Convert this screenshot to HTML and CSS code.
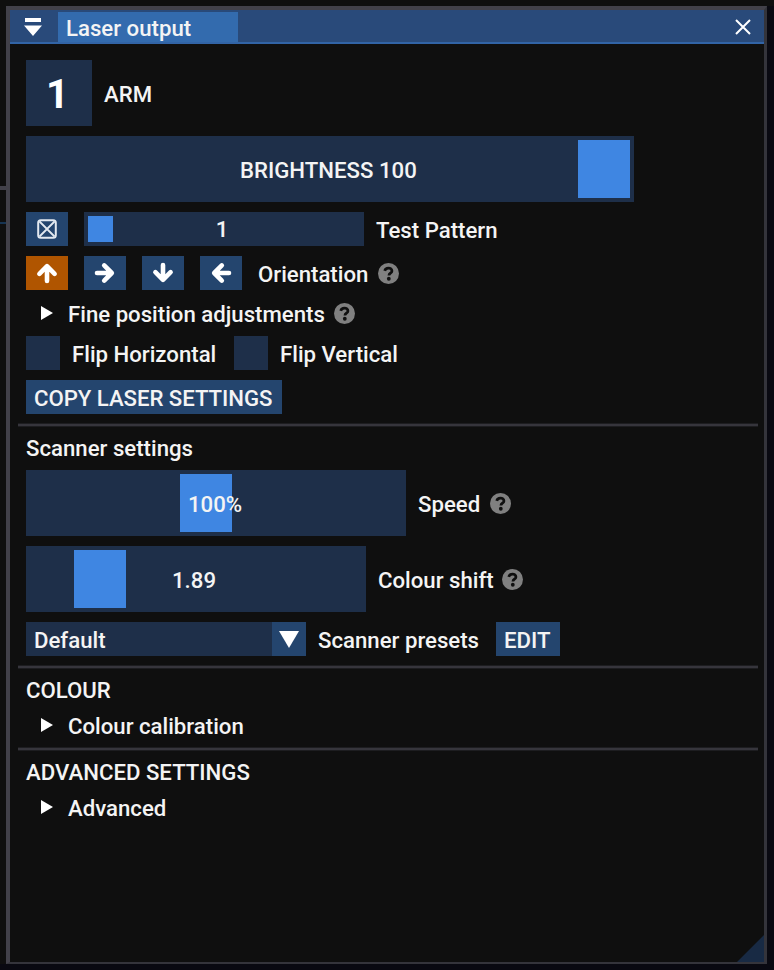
FILE: index.html
```
<!DOCTYPE html>
<html lang="en">
<head>
<meta charset="utf-8">
<title>Laser output</title>
<link rel="stylesheet" href="styles.css">
</head>
<body>
<svg class="defs" width="0" height="0">
  <symbol id="arrow" viewBox="0 0 22 22"><path d="M11 19V5M3.4 11.8L11 4.2l7.6 7.6" fill="none" stroke="#fff" stroke-width="4.6" stroke-linejoin="round" stroke-linecap="round"/></symbol>
  <symbol id="help" viewBox="0 0 20 20"><circle cx="10" cy="10" r="10" fill="#808080"/><path d="M6.4 7.5C6.9 5.6 8.2 4.9 9.9 4.9c2 0 3.4 1 3.4 2.7 0 2-2.9 2.2-2.9 4.2" fill="none" stroke="#0f0f0f" stroke-width="2.6"/><circle cx="10.3" cy="15" r="1.8" fill="#0f0f0f"/></symbol>
  <symbol id="tree" viewBox="0 0 12 14"><path d="M0 0L12 7L0 14Z" fill="#fff"/></symbol>
</svg>
<div class="gutter"><div class="gutter-rule"></div><div class="gutter-accent"></div></div>
<main class="window">
  <header class="title">
    <svg class="collapse" width="18" height="18" viewBox="0 0 18 18"><path d="M1 0H17V4H1ZM0 7.5H18L9 18Z" fill="#fff"/></svg>
    <div class="tab"><span>Laser output</span></div>
    <svg class="close" width="16" height="16" viewBox="0 0 16 16"><path d="M1 1L15 15M15 1L1 15" stroke="#fff" stroke-width="2"/></svg>
  </header>
  <div class="body">
    <div class="row"><div class="arm">1</div><span class="label">ARM</span></div>
    <div class="row"><div class="slider tall brightness"><div class="grab"></div><span class="value">BRIGHTNESS 100</span></div></div>
    <div class="row">
      <div class="button icon"><svg width="20" height="20" viewBox="0 0 20 20"><path d="M2.5 2.5L17.5 17.5M17.5 2.5L2.5 17.5" stroke="#e3e9f0" stroke-width="1.8"/><rect x="1.2" y="1.2" width="17.6" height="17.6" rx="2.6" fill="none" stroke="#e3e9f0" stroke-width="2"/></svg></div>
      <div class="slider pattern"><div class="grab"></div><span class="value">1</span></div>
      <span class="label">Test Pattern</span>
    </div>
    <div class="row">
      <div class="button icon active"><svg width="22" height="22"><use href="#arrow"/></svg></div>
      <div class="button icon"><svg class="right" width="22" height="22"><use href="#arrow"/></svg></div>
      <div class="button icon"><svg class="down" width="22" height="22"><use href="#arrow"/></svg></div>
      <div class="button icon"><svg class="left" width="22" height="22"><use href="#arrow"/></svg></div>
      <span class="orient">Orientation</span><svg class="help" width="21" height="21"><use href="#help"/></svg>
    </div>
    <div class="row tree"><svg width="12" height="14"><use href="#tree"/></svg><span>Fine position adjustments</span><svg class="help" width="21" height="21"><use href="#help"/></svg></div>
    <div class="row"><div class="check"></div><span class="label flip">Flip Horizontal</span><div class="check"></div><span class="label">Flip Vertical</span></div>
    <div class="row"><div class="button copy">COPY LASER SETTINGS</div></div>
    <div class="separator"></div>
    <div class="row text">Scanner settings</div>
    <div class="row"><div class="slider tall speed"><div class="grab"></div><span class="value">100%</span></div><span class="label">Speed</span><svg class="help" width="21" height="21"><use href="#help"/></svg></div>
    <div class="row"><div class="slider tall shift"><div class="grab"></div><span class="value">1.89</span></div><span class="label">Colour shift</span><svg class="help near" width="21" height="21"><use href="#help"/></svg></div>
    <div class="row">
      <div class="combo"><span>Default</span><div class="drop"><svg width="20" height="17" viewBox="0 0 20 17"><path d="M0 0H20L10 17Z" fill="#fff"/></svg></div></div>
      <span class="label presets">Scanner presets</span><div class="button edit">EDIT</div>
    </div>
    <div class="separator"></div>
    <div class="row text">COLOUR</div>
    <div class="row tree"><svg width="12" height="14"><use href="#tree"/></svg><span>Colour calibration</span></div>
    <div class="separator"></div>
    <div class="row text">ADVANCED SETTINGS</div>
    <div class="row tree"><svg width="12" height="14"><use href="#tree"/></svg><span>Advanced</span></div>
  </div>
  <div class="resize"></div>
</main>
</body>
</html>
```
FILE: styles.css
```
* { box-sizing: border-box; }
body {
  margin: 0;
  width: 774px;
  height: 970px;
  display: flex;
  overflow: hidden;
  background: linear-gradient(#0f0f0f 6px, transparent 6px), #090911;
  color: #f4f4f4;
  font: 500 22.2px/26px Roboto, sans-serif;
  white-space: nowrap;
}
svg { display: block; flex: none; }
.defs { position: absolute; }
.gutter { width: 6px; height: 964px; padding-top: 186px; background: #0f0f0f; }
.gutter-rule { height: 4px; background: #42414a; }
.gutter-accent { height: 2px; margin-top: 32px; background: #173452; }
.window {
  position: relative;
  width: 761px;
  height: 958px;
  margin-top: 6px;
  background: #0f0f0f;
  border: solid #42414a;
  border-width: 4px 3px 2px 4px;
  border-right-color: #34343b;
  border-bottom-color: #34343b;
}
.title {
  height: 34px;
  display: flex;
  align-items: center;
  padding: 0 13px 0 14px;
  background: #294a7a;
  border-bottom: 2px solid #3264a6;
}
.collapse { margin-top: 2px; }
.tab { width: 180px; height: 30px; margin: 2px 0 0 16px; padding: 3px 8px; background: #336bae; }
.close { margin: 2px 0 0 auto; }
.body { display: flex; flex-direction: column; gap: 10px; padding: 16px 6px 0 16px; }
.row { display: flex; align-items: center; }
.label { margin-left: 12px; padding-top: 2px; }
.arm {
  width: 66px;
  height: 66px;
  padding-right: 3px;
  background: #1e2f49;
  font-size: 40px;
  font-weight: 700;
  line-height: 69px;
  text-align: center;
  color: #fff;
}
.slider { display: grid; height: 34px; background: #1e2f49; padding: 4px; }
.slider > * { grid-area: 1 / 1; }
.tall { height: 66px; }
.grab { width: 52px; background: #3f86e2; }
.value { place-self: center; padding: 2px 4px 0 0; }
.brightness { width: 608px; }
.brightness .grab { margin-left: 548px; }
.brightness .value { justify-self: start; margin-left: 210px; }
.pattern { width: 280px; }
.pattern .grab { width: 25px; }
.pattern .value { padding-top: 0; }
.speed { width: 380px; }
.speed .grab { margin-left: 150px; }
.speed .value { padding-right: 2px; }
.shift { width: 340px; }
.shift .grab { margin-left: 44px; }
.button { height: 34px; padding: 5px 0 0 8px; background: #24456e; }
.icon { display: grid; place-items: center; width: 42px; padding: 0; margin-right: 16px; }
.active { background: #b05500; }
.right { transform: rotate(90deg); }
.down { transform: rotate(180deg); }
.left { transform: rotate(270deg); }
.orient { padding-top: 2px; }
.help { margin: 1px 0 0 10px; }
.near { margin-left: 8px; }
.tree { height: 26px; padding-left: 15px; }
.tree span { margin-left: 15px; padding-top: 2px; }
.tree .help { margin-left: 9px; }
.check { width: 34px; height: 34px; background: #1e2f49; }
.flip { width: 162px; }
.copy { width: 256px; letter-spacing: -0.05px; }
.separator { height: 2px; margin: 0 0 -2px -8px; background: #36353c; box-shadow: 0 1px #1d1d20, 0 -1px #1d1d20; }
.text { height: 26px; padding-top: 2px; }
.combo { display: flex; justify-content: space-between; width: 280px; height: 34px; padding-left: 8px; background: #1e2f49; }
.combo span { padding-top: 5px; }
.drop { display: grid; place-items: center; width: 34px; background: #24456e; }
.presets { width: 178px; }
.edit { width: 64px; }
.resize {
  position: absolute;
  right: 0;
  bottom: 0;
  width: 27px;
  height: 27px;
  background: #182a44;
  clip-path: polygon(100% 0, 100% 100%, 0 100%);
}
```
